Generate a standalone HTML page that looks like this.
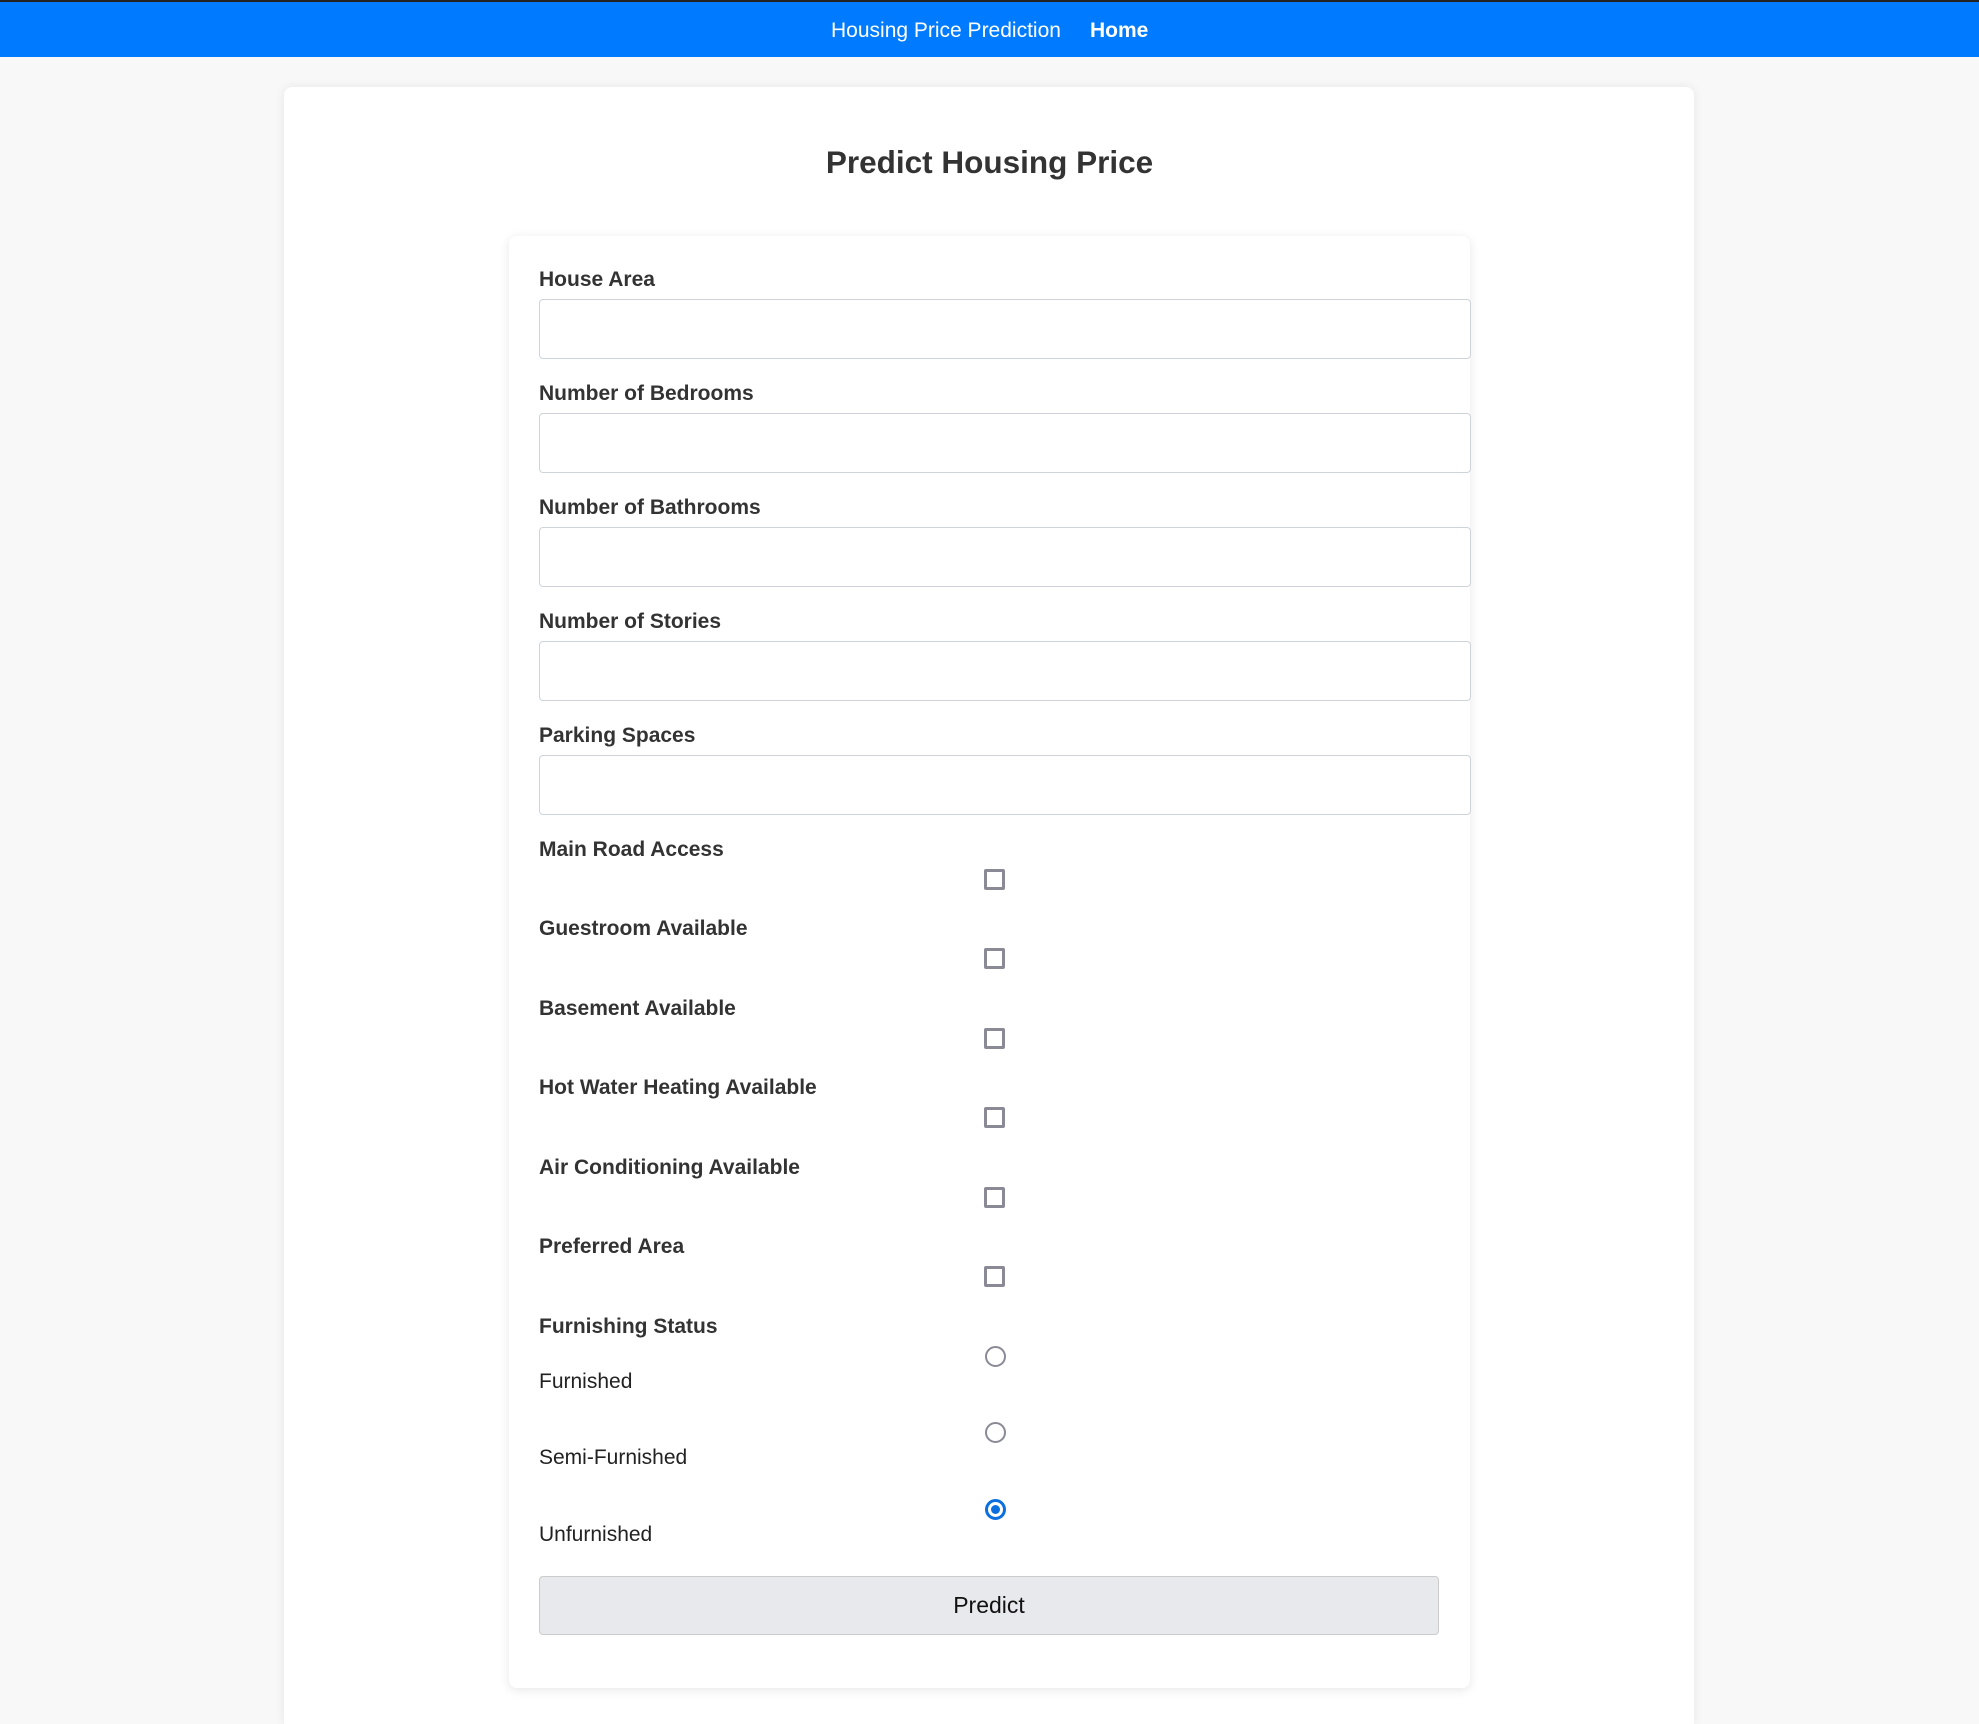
<!DOCTYPE html>
<html><head><meta charset="utf-8"><style>
*{box-sizing:border-box;margin:0;padding:0}
html,body{width:1979px;height:1724px;overflow:hidden}
body{background:#f8f8f8;font-family:"Liberation Sans",Arial,sans-serif;color:#333;position:relative}
.top{position:absolute;left:0;top:0;width:1979px;height:2px;background:#222}
.nav{position:absolute;left:0;top:2px;width:1979px;height:55px;background:#007bff}
.nav span{position:absolute;top:17px;color:#fff;font-size:21px;line-height:23px}
.card{position:absolute;left:284px;top:87px;width:1410px;height:1637px;background:#fff;border-radius:8px 8px 0 0;box-shadow:0 0 10px rgba(0,0,0,.08)}
h1{position:absolute;left:0;width:1979px;text-align:center;top:143px;font-size:31.5px;line-height:38px;font-weight:bold;color:#333}
.form{position:absolute;left:509px;top:236px;width:961px;height:1452px;background:#fff;border-radius:8px;box-shadow:0 2px 10px rgba(0,0,0,.1)}
.lb{position:absolute;left:539px;font-size:21px;font-weight:bold;line-height:24px;color:#333}
.rl{position:absolute;left:539px;font-size:21px;line-height:24px;color:#222}
.in{position:absolute;left:539px;width:932px;height:60px;border:1px solid #ced4da;border-radius:4px;background:#fff}
.cb{position:absolute;left:984px;width:21px;height:21px;border:3px solid #8a8a96;border-radius:2px}
.rd{position:absolute;left:985px;width:21px;height:21px;border:2.5px solid #8a8a96;border-radius:50%}
.rd.on{border:3px solid #0b6fe0}
.rd.on::after{content:"";position:absolute;left:3px;top:3px;width:9px;height:9px;border-radius:50%;background:#0b6fe0}
.btn{position:absolute;left:539px;top:1576px;width:900px;height:59px;background:#e8e9ec;border:1px solid #ccc;border-radius:4px;text-align:center;line-height:57px;font-size:23px;color:#111}
</style></head><body>
<div class="top"></div>
<div class="nav"><span style="left:831px">Housing Price Prediction</span><span style="left:1090px;font-weight:bold">Home</span></div>
<div class="card"></div>
<h1>Predict Housing Price</h1>
<div class="form"></div>
<div class="lb" style="top:268px">House Area</div><div class="in" style="top:299px"></div>
<div class="lb" style="top:382px">Number of Bedrooms</div><div class="in" style="top:413px"></div>
<div class="lb" style="top:496px">Number of Bathrooms</div><div class="in" style="top:527px"></div>
<div class="lb" style="top:610px">Number of Stories</div><div class="in" style="top:641px"></div>
<div class="lb" style="top:724px">Parking Spaces</div><div class="in" style="top:755px"></div>
<div class="lb" style="top:838px">Main Road Access</div><div class="cb" style="top:869px"></div>
<div class="lb" style="top:917px">Guestroom Available</div><div class="cb" style="top:948px"></div>
<div class="lb" style="top:997px">Basement Available</div><div class="cb" style="top:1028px"></div>
<div class="lb" style="top:1076px">Hot Water Heating Available</div><div class="cb" style="top:1107px"></div>
<div class="lb" style="top:1156px">Air Conditioning Available</div><div class="cb" style="top:1187px"></div>
<div class="lb" style="top:1235px">Preferred Area</div><div class="cb" style="top:1266px"></div>
<div class="lb" style="top:1315px">Furnishing Status</div>
<div class="rd" style="top:1346px"></div><div class="rl" style="top:1370px">Furnished</div>
<div class="rd" style="top:1422px"></div><div class="rl" style="top:1446px">Semi-Furnished</div>
<div class="rd on" style="top:1499px"></div><div class="rl" style="top:1523px">Unfurnished</div>
<div class="btn">Predict</div>
</body></html>
